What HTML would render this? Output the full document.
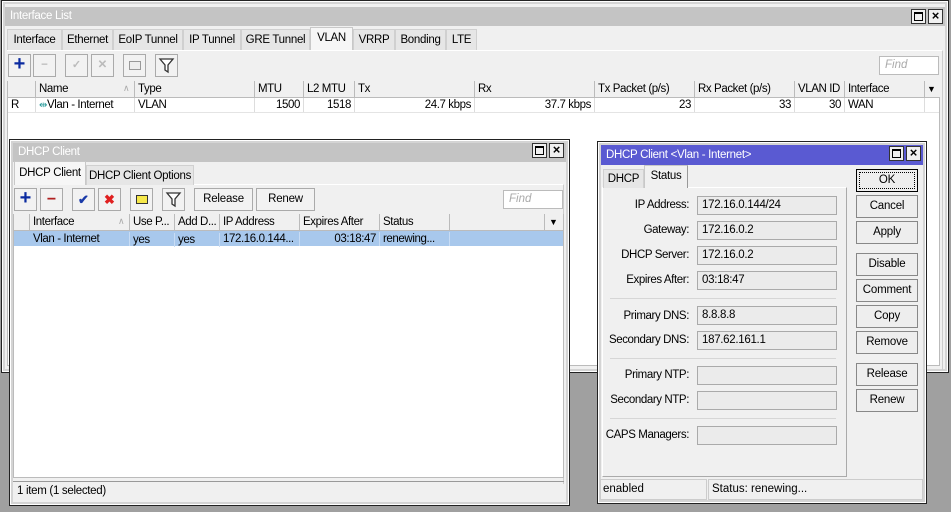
<!DOCTYPE html>
<html><head><meta charset="utf-8"><style>
*{box-sizing:border-box;margin:0;padding:0}
body{width:951px;height:512px;background:#a0a0a0;font-family:"Liberation Sans",sans-serif;font-size:11.5px;color:#000;position:relative;overflow:hidden}
.a{position:absolute}
.win{position:absolute;background:#f0f0f0;border:1px solid #222;box-shadow:inset 0 0 0 1px #fff,inset 0 0 0 3px #d4d4d4}
.tb{position:absolute;left:3px;right:3px;height:19px;background:#c4c4c4;color:#fff;padding:3px 5px;white-space:nowrap;letter-spacing:-0.3px}
.tb.act{background:#5a5ad2}
.wb{position:absolute;top:2px;width:15px;height:15px;background:#f0f0f0;border:1px solid #333}
.tab{position:absolute;height:21px;padding:4px 0;text-align:center;border:1px solid #d0d0d0;border-bottom:none;background:#e6e6e6;white-space:nowrap;letter-spacing:-0.3px;overflow:hidden}
.tab.s{background:#f6f6f6;border-color:#c8c8c8;height:23px;top:-2px}
.btn{position:absolute;width:23px;height:23px;border:1px solid #aaa;background:#f2f2f2;text-align:center;line-height:21px;font-weight:bold}
.tbtn{position:absolute;height:23px;border:1px solid #aaa;background:#f2f2f2;text-align:center;line-height:21px;letter-spacing:-0.2px}
.find{position:absolute;height:19px;border:1px solid #bbb;background:#fff;color:#aaa;font-style:italic;padding:2px 5px}
.hd{position:absolute;height:17px;border-right:1px solid #bbb;border-bottom:1px solid #bbb;background:#f0f0f0;padding:2px 3px;white-space:nowrap;overflow:hidden;letter-spacing:-0.4px}
.cl{position:absolute;height:14px;border-right:1px solid #ddd;padding:0 3px;white-space:nowrap;overflow:hidden;letter-spacing:-0.4px;line-height:14px}
.r{text-align:right}
.lb{position:absolute;text-align:right;width:92px;letter-spacing:-0.4px;white-space:nowrap}
.fld{position:absolute;left:697px;width:140px;height:19px;border:1px solid #aaa;background:#ebebeb;padding:2px 4px;letter-spacing:-0.3px}
.db{position:absolute;left:856px;width:62px;height:23px;border:1px solid #888;background:#eee;text-align:center;line-height:21px;letter-spacing:-0.2px}
.sep{position:absolute;left:610px;width:226px;height:1px;background:#d6d6d6}
</style></head><body>

<div class="win" style="left:1px;top:0;width:948px;height:373px">
 <div class="tb" style="top:6px">Interface List</div>
 <div class="wb" style="left:909px;top:8px"><div class="a" style="left:2px;top:2px;width:9px;height:9px;border:1px solid #000;border-top-width:2px"></div></div>
 <div class="wb" style="left:926px;top:8px;text-align:center;line-height:12px;font-weight:bold;font-size:13px">×</div>
</div>
<div class="a" style="left:7px;top:29px;width:936px;height:340px">
 <div class="a" style="left:0;top:21px;width:936px;height:320px;border-top:1px solid #fff;border-right:1px solid #ccc"></div>
 <div class="tab" style="left:0;width:55px">Interface</div>
 <div class="tab" style="left:55px;width:51px">Ethernet</div>
 <div class="tab" style="left:106px;width:70px">EoIP Tunnel</div>
 <div class="tab" style="left:176px;width:58px">IP Tunnel</div>
 <div class="tab" style="left:234px;width:69px">GRE Tunnel</div>
 <div class="tab s" style="left:303px;width:43px">VLAN</div>
 <div class="tab" style="left:346px;width:42px">VRRP</div>
 <div class="tab" style="left:388px;width:51px">Bonding</div>
 <div class="tab" style="left:439px;width:31px">LTE</div>
</div>
<div class="btn" style="left:8px;top:54px;color:#0a2aa0;font-size:20px;line-height:19px">+</div>
<div class="btn" style="left:33px;top:54px;color:#bbb">−</div>
<div class="btn" style="left:65px;top:54px;color:#bbb;font-size:11px">✓</div>
<div class="btn" style="left:91px;top:54px;color:#bbb">✕</div>
<div class="btn" style="left:123px;top:54px"><div class="a" style="left:5px;top:6px;width:12px;height:9px;border:1px solid #999;background:#eee"></div></div>
<div class="btn" style="left:155px;top:54px"><svg width="21" height="21"><path d="M4 4h13l-5 6v7l-3-2v-5z" fill="#fff" stroke="#333" stroke-width="1.3"/></svg></div>
<div class="find" style="left:879px;top:56px;width:60px">Find</div>

<div class="a" style="left:7px;top:81px;width:933px;height:285px;background:#fff;border:1px solid #bbb"></div>
<div class="hd" style="left:8px;top:81px;width:28px"></div>
<div class="hd" style="left:36px;top:81px;width:99px">Name<span style="position:absolute;left:87px;color:#aaa;font-size:9px">∧</span></div>
<div class="hd" style="left:135px;top:81px;width:120px">Type</div>
<div class="hd" style="left:255px;top:81px;width:49px">MTU</div>
<div class="hd" style="left:304px;top:81px;width:51px">L2 MTU</div>
<div class="hd" style="left:355px;top:81px;width:120px">Tx</div>
<div class="hd" style="left:475px;top:81px;width:120px">Rx</div>
<div class="hd" style="left:595px;top:81px;width:100px">Tx Packet (p/s)</div>
<div class="hd" style="left:695px;top:81px;width:100px">Rx Packet (p/s)</div>
<div class="hd" style="left:795px;top:81px;width:50px">VLAN ID</div>
<div class="hd" style="left:845px;top:81px;width:80px">Interface</div>
<div class="hd" style="left:925px;top:81px;width:15px;border-right:none;font-size:9px;padding:3px 2px">▼</div>
<div class="cl" style="left:8px;top:98px;width:28px">R</div>
<div class="cl" style="left:36px;top:98px;width:99px"><span style="color:#2a9a9a;font-size:10px">⇹</span>Vlan - Internet</div>
<div class="cl" style="left:135px;top:98px;width:120px">VLAN</div>
<div class="cl r" style="left:255px;top:98px;width:49px">1500</div>
<div class="cl r" style="left:304px;top:98px;width:51px">1518</div>
<div class="cl r" style="left:355px;top:98px;width:120px">24.7 kbps</div>
<div class="cl r" style="left:475px;top:98px;width:120px">37.7 kbps</div>
<div class="cl r" style="left:595px;top:98px;width:100px">23</div>
<div class="cl r" style="left:695px;top:98px;width:100px">33</div>
<div class="cl r" style="left:795px;top:98px;width:50px">30</div>
<div class="cl" style="left:845px;top:98px;width:80px">WAN</div>
<div class="a" style="left:8px;top:112px;width:931px;height:1px;background:#e4e4e4"></div>

<div class="win" style="left:9px;top:139px;width:561px;height:367px">
 <div class="tb" style="top:3px">DHCP Client</div>
 <div class="wb" style="left:522px;top:3px"><div class="a" style="left:2px;top:2px;width:9px;height:9px;border:1px solid #000;border-top-width:2px"></div></div>
 <div class="wb" style="left:539px;top:3px;text-align:center;line-height:12px;font-weight:bold;font-size:13px">×</div>
</div>
<div class="a" style="left:14px;top:163px;width:550px;height:320px">
 <div class="a" style="left:0;top:21px;width:550px;height:300px;border-top:1px solid #fff;border-right:1px solid #ccc"></div>
 <div class="tab s" style="left:0;top:-2px;width:72px;height:24px;padding-top:5px">DHCP Client</div>
 <div class="tab" style="left:72px;top:2px;width:108px;height:20px;padding-top:4px">DHCP Client Options</div>
</div>
<div class="btn" style="left:14px;top:188px;color:#0a2aa0;font-size:20px;line-height:19px">+</div>
<div class="btn" style="left:40px;top:188px;color:#b02020;font-size:16px">−</div>
<div class="btn" style="left:72px;top:188px;color:#1a3aa8;font-size:13px">✔</div>
<div class="btn" style="left:98px;top:188px;color:#e02020;font-size:13px">✖</div>
<div class="btn" style="left:130px;top:188px"><div class="a" style="left:5px;top:6px;width:12px;height:9px;border:1px solid #333;background:#f6e84a"></div></div>
<div class="btn" style="left:162px;top:188px"><svg width="21" height="21"><path d="M4 4h13l-5 6v7l-3-2v-5z" fill="#fff" stroke="#333" stroke-width="1.3"/></svg></div>
<div class="tbtn" style="left:194px;top:188px;width:59px">Release</div>
<div class="tbtn" style="left:256px;top:188px;width:59px">Renew</div>
<div class="find" style="left:503px;top:190px;width:60px">Find</div>

<div class="a" style="left:13px;top:214px;width:551px;height:264px;background:#fff;border:1px solid #bbb"></div>
<div class="hd" style="left:14px;top:214px;width:16px"></div>
<div class="hd" style="left:30px;top:214px;width:100px">Interface<span style="position:absolute;left:88px;color:#aaa;font-size:9px">∧</span></div>
<div class="hd" style="left:130px;top:214px;width:45px">Use P...</div>
<div class="hd" style="left:175px;top:214px;width:45px">Add D...</div>
<div class="hd" style="left:220px;top:214px;width:80px">IP Address</div>
<div class="hd" style="left:300px;top:214px;width:80px">Expires After</div>
<div class="hd" style="left:380px;top:214px;width:70px">Status</div>
<div class="hd" style="left:450px;top:214px;width:95px"></div>
<div class="hd" style="left:545px;top:214px;width:18px;border-right:none;font-size:9px;padding:3px 4px">▼</div>
<div class="a" style="left:14px;top:231px;width:549px;height:15px;background:#a8c8ec"></div>
<div class="cl" style="left:30px;top:232px;width:100px;border-color:#c8dcf4">Vlan - Internet</div>
<div class="cl" style="left:130px;top:233px;width:45px;border-color:#c8dcf4">yes</div>
<div class="cl" style="left:175px;top:233px;width:45px;border-color:#c8dcf4">yes</div>
<div class="cl" style="left:220px;top:232px;width:80px;border-color:#c8dcf4">172.16.0.144...</div>
<div class="cl r" style="left:300px;top:232px;width:80px;border-color:#c8dcf4">03:18:47</div>
<div class="cl" style="left:380px;top:232px;width:70px;border-color:#c8dcf4">renewing...</div>
<div class="a" style="left:13px;top:481px;width:551px;height:20px;border-top:1px solid #999;padding:3px 4px;letter-spacing:-0.3px">1 item (1 selected)</div>

<div class="win" style="left:597px;top:141px;width:330px;height:363px">
 <div class="tb act" style="top:3px;height:20px;padding-top:4px">DHCP Client &lt;Vlan - Internet&gt;</div>
 <div class="wb" style="left:291px;top:4px"><div class="a" style="left:2px;top:2px;width:9px;height:9px;border:1px solid #000;border-top-width:2px"></div></div>
 <div class="wb" style="left:308px;top:4px;text-align:center;line-height:12px;font-weight:bold;font-size:13px">×</div>
</div>
<div class="a" style="left:602px;top:187px;width:245px;height:290px;border:1px solid #c8c8c8;border-top-color:#fff;border-left-color:#fff;border-right-color:#aaa;border-bottom-color:#aaa"></div>
<div class="tab" style="left:603px;top:169px;width:41px;height:19px;padding-top:3px">DHCP</div>
<div class="tab s" style="left:644px;top:165px;width:44px;height:23px;padding-top:4px;background:#f0f0f0;border-right-color:#999">Status</div>

<div class="lb" style="left:597px;top:199px">IP Address:</div><div class="fld" style="top:196px">172.16.0.144/24</div>
<div class="lb" style="left:597px;top:224px">Gateway:</div><div class="fld" style="top:221px">172.16.0.2</div>
<div class="lb" style="left:597px;top:249px">DHCP Server:</div><div class="fld" style="top:246px">172.16.0.2</div>
<div class="lb" style="left:597px;top:274px">Expires After:</div><div class="fld" style="top:271px">03:18:47</div>
<div class="sep" style="top:298px"></div>
<div class="lb" style="left:597px;top:310px">Primary DNS:</div><div class="fld" style="top:306px">8.8.8.8</div>
<div class="lb" style="left:597px;top:334px">Secondary DNS:</div><div class="fld" style="top:331px">187.62.161.1</div>
<div class="sep" style="top:358px"></div>
<div class="lb" style="left:597px;top:369px">Primary NTP:</div><div class="fld" style="top:366px"></div>
<div class="lb" style="left:597px;top:394px">Secondary NTP:</div><div class="fld" style="top:391px"></div>
<div class="sep" style="top:418px"></div>
<div class="lb" style="left:597px;top:429px">CAPS Managers:</div><div class="fld" style="top:426px"></div>

<div class="db" style="top:169px;border:1px solid #000;outline:1px dotted #000;outline-offset:-4px">OK</div>
<div class="db" style="top:195px">Cancel</div>
<div class="db" style="top:221px">Apply</div>
<div class="db" style="top:253px">Disable</div>
<div class="db" style="top:279px">Comment</div>
<div class="db" style="top:305px">Copy</div>
<div class="db" style="top:331px">Remove</div>
<div class="db" style="top:363px">Release</div>
<div class="db" style="top:389px">Renew</div>

<div class="a" style="left:600px;top:479px;width:107px;height:21px;border:1px solid #ccc;padding:3px 2px">enabled</div>
<div class="a" style="left:708px;top:479px;width:215px;height:21px;border:1px solid #ccc;padding:3px 3px">Status: renewing...</div>
</body></html>
